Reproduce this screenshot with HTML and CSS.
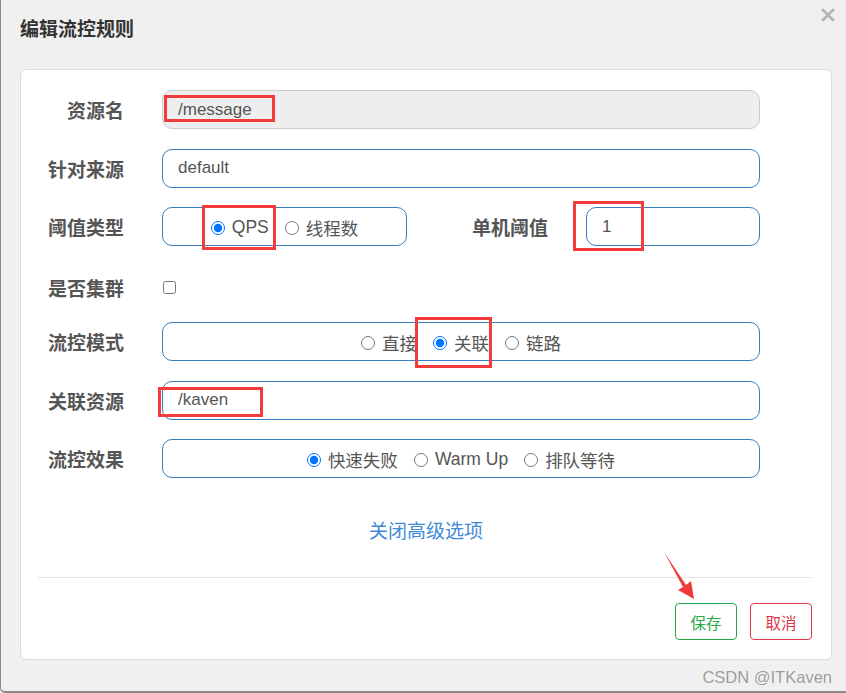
FILE: index.html
```html
<!DOCTYPE html>
<html lang="zh-CN">
  <head>
    <meta charset="UTF-8" />
    <title>编辑流控规则</title>
    <link rel="stylesheet" href="styles.css">
  </head>
  <body>
    <div class="modal">
      <div class="modal-header">
        <h4>编辑流控规则</h4>
        <span class="close" title="关闭">
          <svg width="14" height="14" viewBox="0 0 14 14">
            <path d="M2 2 L12 12 M12 2 L2 12" stroke="#b2b2b2" stroke-width="2.6" stroke-linecap="square" />
          </svg>
        </span>
      </div>

      <div class="card">
        <form class="form">
          <div class="row">
            <label>资源名</label>
            <input class="ctl" type="text" value="/message" disabled />
          </div>

          <div class="row">
            <label>针对来源</label>
            <input class="ctl" type="text" value="default" />
          </div>

          <div class="row split">
            <label>阈值类型</label>
            <div class="ctl radios">
              <label class="opt"><input type="radio" name="grade" checked />QPS</label>
              <label class="opt"><input type="radio" name="grade" />线程数</label>
            </div>
            <label>单机阈值</label>
            <input class="ctl" type="text" value="1" />
          </div>

          <div class="row check">
            <label>是否集群</label>
            <div><input class="box" type="checkbox" /></div>
          </div>

          <div class="row">
            <label>流控模式</label>
            <div class="ctl radios">
              <label class="opt"><input type="radio" name="strategy" />直接</label>
              <label class="opt"><input type="radio" name="strategy" checked />关联</label>
              <label class="opt"><input type="radio" name="strategy" />链路</label>
            </div>
          </div>

          <div class="row">
            <label>关联资源</label>
            <input class="ctl" type="text" value="/kaven" />
          </div>

          <div class="row">
            <label>流控效果</label>
            <div class="ctl radios">
              <label class="opt"><input type="radio" name="behavior" checked />快速失败</label>
              <label class="opt"><input type="radio" name="behavior" />Warm Up</label>
              <label class="opt"><input type="radio" name="behavior" />排队等待</label>
            </div>
          </div>
        </form>

        <div class="more"><a href="#">关闭高级选项</a></div>

        <div class="footer">
          <button class="btn save">保存</button>
          <button class="btn cancel">取消</button>
        </div>
      </div>

      <!-- annotations drawn on top of the screenshot -->
      <div class="mark" style="left:163px;top:95px;width:111px;height:27px"></div>
      <div class="mark" style="left:201px;top:205px;width:74px;height:45px"></div>
      <div class="mark" style="left:572px;top:201px;width:71px;height:50px"></div>
      <div class="mark" style="left:414px;top:317px;width:77px;height:51px"></div>
      <div class="mark" style="left:157px;top:387px;width:105px;height:30px"></div>

      <svg class="arrow" width="40" height="56" viewBox="0 0 40 56">
        <polygon points="3,4 25,37 30,33 33,51 17,42 22,39" fill="#f03a3a" />
      </svg>

      <span class="watermark">CSDN @ITKaven</span>
    </div>
  </body>
</html>
```

FILE: styles.css
```css
* {
  box-sizing: border-box;
}

body {
  margin: 0;
  font-family: "Liberation Sans", "Noto Sans CJK SC", sans-serif;
  background: #f0f0f0;
}

.modal {
  position: relative;
  width: 846px;
  height: 693px;
  background: #f0f0f0;
  border-left: 1px solid #8a8a8a;
  border-bottom: 2px solid #8a8a8a;
  border-bottom-left-radius: 5px;
  overflow: hidden;
}

.modal-header {
  display: flex;
  justify-content: space-between;
  align-items: flex-start;
  padding: 15px 11px 0 19px;
  height: 56px;
}

.modal-header h4 {
  margin: 0;
  font-family: "Noto Sans CJK SC", sans-serif;
  font-size: 19px;
  line-height: 26px;
  font-weight: 700;
  color: #333;
}

.close {
  display: block;
  margin-top: -7px;
  cursor: pointer;
}

.close svg {
  display: block;
}

.card {
  margin: 13px 14px 0 19px;
  background: #fff;
  border: 1px solid #dcdcdc;
  border-radius: 6px;
  padding: 20px 0 19px 0;
}

.form {
  display: grid;
  row-gap: 19.5px;
  padding-right: 71px;
}

.row {
  display: grid;
  grid-template-columns: 103px 1fr;
  column-gap: 38px;
  align-items: center;
  height: 39px;
}

.row.split {
  grid-template-columns: 103px 245px 1fr 174px;
}

.row.check {
  height: 37px;
  padding-top: 6px;
}

.row > label {
  text-align: right;
  font-family: "Noto Sans CJK SC", sans-serif;
  font-size: 19px;
  font-weight: 700;
  color: #555;
  white-space: nowrap;
}

.ctl {
  height: 39px;
  width: 100%;
  border: 1px solid #3a7dbf;
  border-radius: 10px;
  padding: 0 15px;
  font-family: "Liberation Sans", "Noto Sans CJK SC", sans-serif;
  font-size: 17px;
  color: #555;
  background: #fff;
  outline: none;
}

.ctl:disabled {
  background: #eee;
  border-color: #ccc;
  color: #555;
}

.radios {
  display: flex;
  justify-content: center;
  align-items: center;
  gap: 16px;
  padding: 2px 0 0 0;
}

.opt {
  display: flex;
  align-items: center;
  font-size: 17.5px;
  color: #555;
  white-space: nowrap;
  cursor: pointer;
}

.opt input {
  width: 14px;
  height: 14px;
  margin: 0 7px 0 0;
}

.box {
  display: block;
  width: 13px;
  height: 13px;
  margin: 0 0 0 1px;
}

.more {
  text-align: center;
  margin-top: 40px;
  line-height: 24px;
}

.more a {
  font-family: "Noto Sans CJK SC", sans-serif;
  font-size: 19px;
  color: #3f8ad8;
  text-decoration: none;
}

.footer {
  margin: 32px 19px 0 17px;
  border-top: 1px solid #e3e3e3;
  padding-top: 25px;
  display: flex;
  justify-content: flex-end;
  gap: 13px;
}

.btn {
  width: 62px;
  height: 37px;
  background: #fff;
  border: 1px solid;
  border-radius: 4px;
  font-family: "Noto Sans CJK SC", sans-serif;
  font-size: 15.5px;
  cursor: pointer;
}

.btn.save {
  color: #28a745;
  border-color: #28a745;
}

.btn.cancel {
  color: #dc3545;
  border-color: #dc3545;
}

.mark {
  position: absolute;
  border: 3px solid #f23b3b;
  pointer-events: none;
}

.arrow {
  position: absolute;
  left: 660px;
  top: 548px;
}

.watermark {
  position: absolute;
  right: 14px;
  bottom: 4px;
  font-size: 16.5px;
  color: #9b9b9b;
  text-shadow: 0 0 1px #fff;
}
```
